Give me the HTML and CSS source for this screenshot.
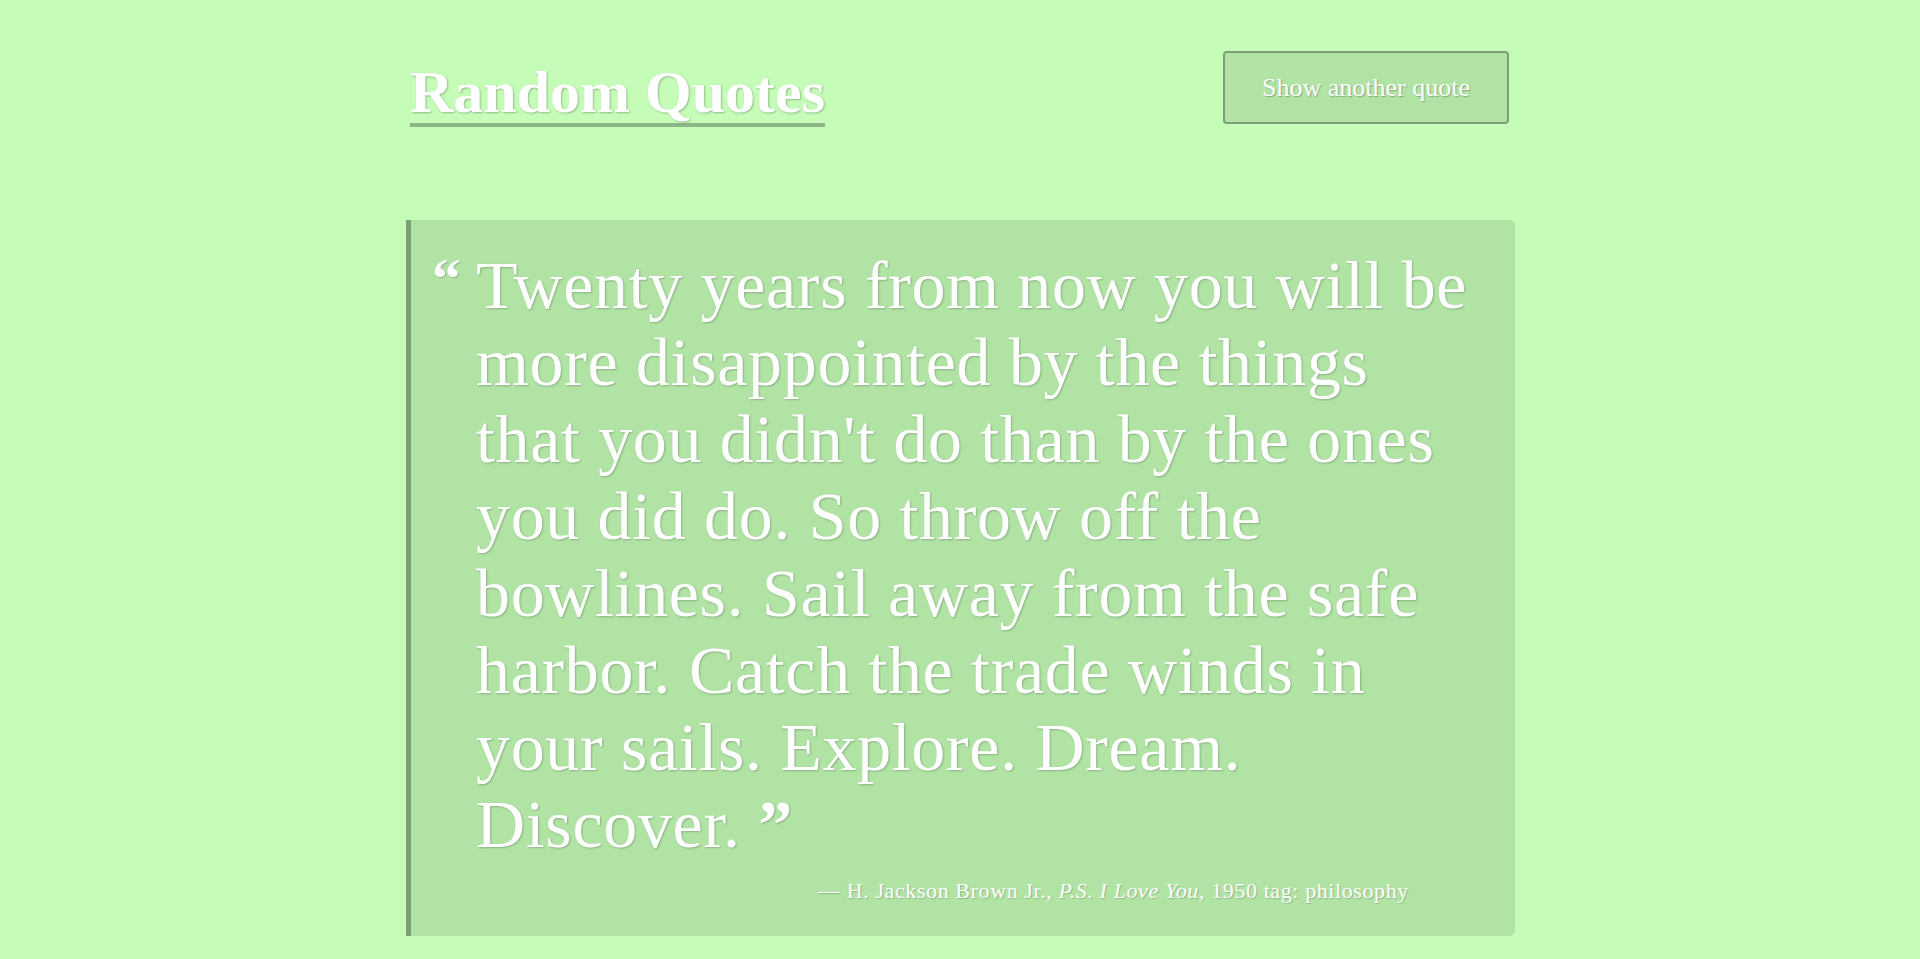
FILE: index.html
```html
<!DOCTYPE html>
<html lang="en">
<head>
<meta charset="utf-8">
<title>Random Quotes</title>
<link rel="stylesheet" href="styles.css">
</head>
<body>
<div class="page">
  <header class="header">
    <h1 class="title">Random Quotes</h1>
    <button class="next-btn" type="button">Show another quote</button>
  </header>
  <blockquote class="quote-box">
    <div class="quote">
      <span class="mark-open">&ldquo;</span>
      <div class="quote-body">
        <p class="quote-text">Twenty years from now you will be<br>more disappointed by the things<br>that you didn't do than by the ones<br>you did do. So throw off the<br>bowlines. Sail away from the safe<br>harbor. Catch the trade winds in<br>your sails. Explore. Dream.<br>Discover. <span class="mark-close">&rdquo;</span></p>
        <footer class="source">&mdash; H. Jackson Brown Jr., <cite>P.S. I Love You</cite>, 1950 tag: philosophy</footer>
      </div>
    </div>
  </blockquote>
</div>
</body>
</html>
```
FILE: styles.css
```css
html, body {
  margin: 0;
  padding: 0;
}
body {
  background: #c5fcb8;
  font-family: "Liberation Serif", "Times New Roman", serif;
  color: #ffffff;
}
.page {
  width: 1100px;
  margin: 0 auto;
}
.header {
  display: flex;
  justify-content: space-between;
  align-items: flex-start;
  padding-top: 51px;
}
.title {
  margin: 11px 0 0 0;
  font-size: 60px;
  font-weight: 700;
  line-height: 60px;
  padding-bottom: 1px;
  border-bottom: 4px solid #8db587;
  text-shadow: 1px 1px 2px rgba(0, 0, 0, 0.25);
}
.next-btn {
  width: 286px;
  height: 73px;
  margin-right: 1px;
  background: #b1e3a5;
  border: 2px solid #7d9f77;
  border-radius: 4px;
  color: #ffffff;
  font-family: "Liberation Serif", "Times New Roman", serif;
  font-size: 26px;
  text-shadow: 1px 1px 1px rgba(0, 0, 0, 0.25);
  cursor: pointer;
  padding: 0;
}
.quote-box {
  margin: 93px -5px 0 -4px;
  background: #b1e3a5;
  border-left: 5px solid #7d9f77;
  border-radius: 0 5px 5px 0;
  padding: 27px 45px 32px 21px;
}
.quote {
  display: flex;
  align-items: flex-start;
  gap: 14px;
}
.mark-open {
  width: 30px;
  flex: none;
  font-size: 58px;
  font-weight: 700;
  line-height: 58px;
  margin-top: 3px;
  text-shadow: 1px 1px 1px rgba(0, 0, 0, 0.2);
}
.quote-body {
  flex: 1;
}
.quote-text {
  margin: 0;
  font-size: 68px;
  line-height: 77px;
  letter-spacing: 0.65px;
  white-space: nowrap;
  text-shadow: 1px 1px 2px rgba(0, 0, 0, 0.22);
}
.mark-close {
  font-weight: 700;
}
.source {
  margin-top: 15px;
  padding-left: 342px;
  font-size: 22px;
  line-height: 26px;
  letter-spacing: 0.6px;
  white-space: nowrap;
  text-shadow: 1px 1px 1px rgba(0, 0, 0, 0.2);
}
.source cite {
  font-style: italic;
}
```
